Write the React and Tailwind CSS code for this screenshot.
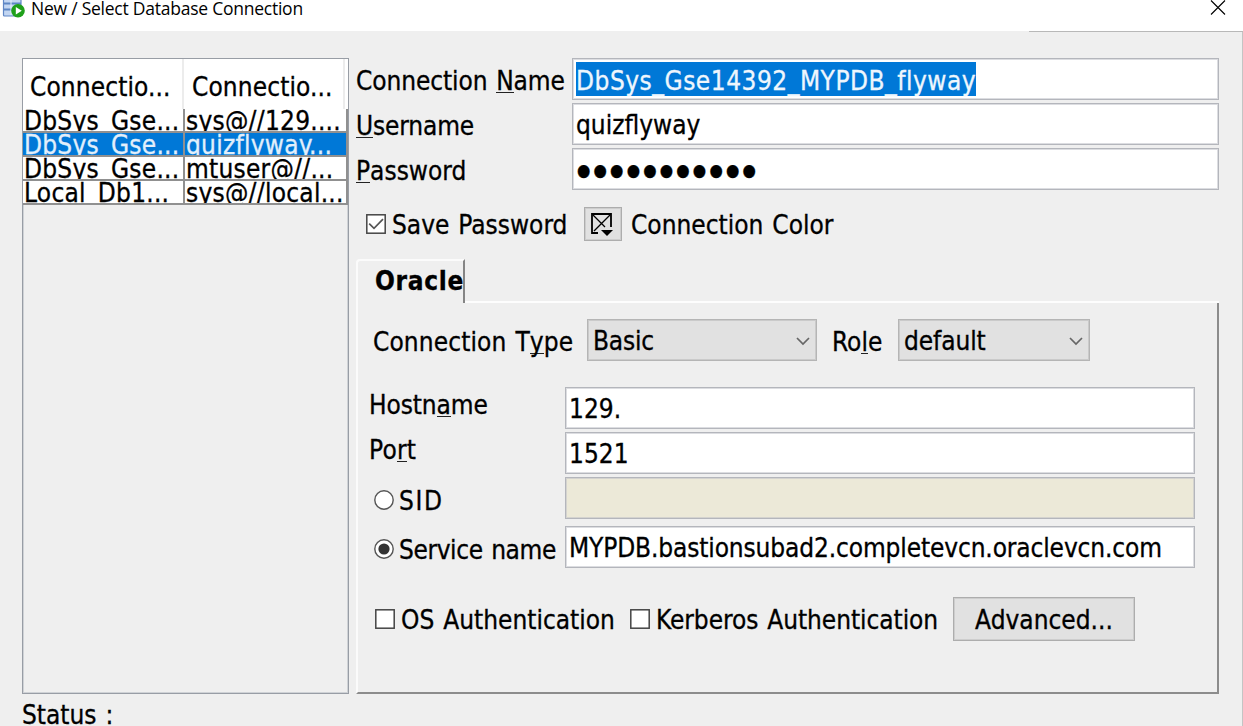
import React from "react";

function Field({ children, className = "" }) {
  return (
    <div className={`flex h-[42px] items-center overflow-hidden border border-[#b4b6bc] bg-white pt-[2px] pl-[3px] shadow-[inset_0_0_0_1px_#dcdde1] ${className}`}>
      {children}
    </div>
  );
}

function Key({ children }) {
  return <span className="inline-block h-[27px] border-b border-[#222]">{children}</span>;
}

function Check({ on = false }) {
  return (
    <svg viewBox="0 0 20 20" className="h-5 w-5 shrink-0">
      <rect x="0.8" y="0.8" width="18.4" height="18.4" fill="#fff" stroke="#444" strokeWidth="1.5" />
      {on && <path d="M3.2 9.6 L8 14.3 L17 5.2" fill="none" stroke="#555" strokeWidth="1.7" />}
    </svg>
  );
}

function Radio({ on = false }) {
  return (
    <svg viewBox="0 0 20 20" className="h-5 w-5 shrink-0">
      <circle cx="10" cy="10" r="9.2" fill="#fff" stroke="#555" strokeWidth="1.4" />
      {on && <circle cx="10" cy="10" r="5.6" fill="#333" />}
    </svg>
  );
}

function Select({ label, className }) {
  return (
    <div className={`flex h-[42px] items-center justify-between border border-[#b5b5b5] bg-[#e1e1e1] pt-[2px] pr-[5px] pl-[5px] shadow-[inset_0_0_0_1px_#cacaca] ${className}`}>
      <span>{label}</span>
      <svg viewBox="0 0 16 10" className="h-[10px] w-4">
        <path d="M2 2 L8 8 L14 2" fill="none" stroke="#666" strokeWidth="1.7" />
      </svg>
    </div>
  );
}

const rows = [
  { name: "DbSys_Gse...", detail: "sys@//129....", on: false },
  { name: "DbSys_Gse...", detail: "quizflyway...", on: true },
  { name: "DbSys_Gse...", detail: "mtuser@//...", on: false },
  { name: "Local_Db1...", detail: "sys@//local...", on: false },
];

function ConnectionList() {
  return (
    <div className="h-[636px] w-[327px] border border-[#989da5] shadow-[inset_0_0_0_1px_#cfd2d6]">
      <div className="flex h-[50px] bg-white">
        <div className="w-[161px] border-r-2 border-[#ececec] pt-[13px] pl-[7px] tracking-[0.1px]">Connectio...</div>
        <div className="w-[161px] border-r-2 border-[#ececec] pt-[13px] pl-2 tracking-[0.1px]">Connectio...</div>
      </div>
      {rows.map((r, i) => (
        <div
          key={i}
          className={`flex h-6 w-[325px] border-b-2 border-[#909090] leading-[25px] tracking-[0.25px] ${r.on ? "bg-[#0078d7] text-[#e2effb]" : "bg-white"}`}
        >
          <div className="h-full w-[162px] overflow-hidden border-r-2 border-[#909090] pl-px">{r.name}</div>
          <div className="h-full w-[163px] overflow-hidden border-r-2 border-[#909090] pl-px">{r.detail}</div>
        </div>
      ))}
    </div>
  );
}

function OraclePanel() {
  return (
    <div className="mt-[18px] w-[863px]">
      <div className="flex">
        <div className="h-[44px] w-[109px] rounded-tl border-t-2 border-r-2 border-l-2 border-t-[#fbfbfb] border-r-[#858585] border-l-[#fbfbfb] pt-[5px] pl-[17px] font-bold tracking-[0.7px]">
          Oracle
        </div>
        <div className="grow border-b-2 border-[#fdfdfd]" />
      </div>
      <div className="h-[391px] border-r-2 border-b-2 border-l-2 border-r-[#8c8c8c] border-b-[#8c8c8c] border-l-[#fbfbfb] pt-4 pl-[11px]">
        <div className="flex pl-[4px]">
          <div className="w-[214px] pt-[8px] tracking-[0.1px]">
            Connection T<Key>y</Key>pe
          </div>
          <Select label="Basic" className="w-[230px] tracking-[-0.2px]" />
          <div className="w-[81px] pt-[8px] pl-[15px]">
            Ro<Key>l</Key>e
          </div>
          <Select label="default" className="w-[192px] tracking-[-0.1px]" />
        </div>
        <div className="mt-[26px] flex">
          <div className="w-[196px] pt-[3px] tracking-[-0.1px]">
            Hostn<Key>a</Key>me
          </div>
          <Field className="w-[630px]">129.</Field>
        </div>
        <div className="mt-[3px] flex">
          <div className="w-[196px] pt-[3px] tracking-[0.2px]">
            Po<Key>r</Key>t
          </div>
          <Field className="w-[630px]">1521</Field>
        </div>
        <div className="mt-[3px] flex">
          <div className="flex h-[42px] w-[196px] items-center gap-[5px] pt-[4px] pl-[5px]">
            <Radio />
            <span className="pt-px tracking-[1.6px]">SID</span>
          </div>
          <div className="h-[42px] w-[630px] border border-[#b4b6bc] bg-[#ece9d8] shadow-[inset_0_0_0_1px_#d4d3cf]" />
        </div>
        <div className="mt-[7px] flex">
          <div className="flex h-[42px] w-[196px] items-center gap-[5px] pt-[4px] pl-[5px] whitespace-nowrap">
            <Radio on />
            <span className="pt-[2px] tracking-[-0.4px]">Service name</span>
          </div>
          <Field className="w-[630px]">
            <span className="tracking-[-0.13px]">MYPDB.bastionsubad2.completevcn.oraclevcn.com</span>
          </Field>
        </div>
        <div className="mt-[29px] flex items-center pl-[6px] whitespace-nowrap">
          <Check />
          <span className="ml-[6px] w-[229px] pt-px">OS Authentication</span>
          <Check />
          <span className="ml-[6px] w-[297px] pt-px tracking-[-0.06px]">Kerberos Authentication</span>
          <div className="flex h-[44px] w-[182px] items-center justify-center border border-[#adadad] bg-[#e1e1e1] pt-px shadow-[inset_0_0_0_1px_#cdcdcd]">
            Advanced...
          </div>
        </div>
      </div>
    </div>
  );
}

export default function App() {
  return (
    <div className="flex h-[726px] w-[1243px] flex-col overflow-hidden bg-[#efefef] font-['DejaVu_Sans_Condensed','DejaVu_Sans',sans-serif] text-[26px] leading-[30px] text-black [word-spacing:1.5px] [-webkit-text-stroke:0.3px]">
      <div className="flex h-[31px] shrink-0 items-start bg-white">
        <svg viewBox="0 0 28 20" className="h-5 w-7">
          <rect x="3.5" y="-3" width="17.5" height="19" rx="1" fill="#c3d6f2" stroke="#5f86c6" strokeWidth="1.2" />
          <path d="M4 3.5H21M4 9.5H21" stroke="#5d86c4" strokeWidth="1.8" />
          <path d="M11 -1V15" stroke="#e8f0fb" strokeWidth="1" />
          <circle cx="18" cy="10.7" r="6.8" fill="#1fa01a" />
          <path d="M15.8 7L21.8 10.7L15.8 14.4Z" fill="#fff" />
        </svg>
        <div className="-mt-px grow pl-[3px] font-['Open_Sans',sans-serif] text-[17.5px] leading-[19px] tracking-[-0.24px] [word-spacing:0px] [-webkit-text-stroke:0px]">
          New / Select Database Connection
        </div>
        <svg viewBox="0 0 16 16" className="mr-[17px] h-4 w-4">
          <path d="M1 0.5L15 14.5M15 0.5L1 14.5" stroke="#000" strokeWidth="1.1" />
        </svg>
      </div>
      <div className="flex h-px shrink-0 justify-end">
        <div className="w-[214px] bg-[#b8b8b8]" />
      </div>
      <div className="flex grow border-r border-[#c4c4c4] pt-[26px] pl-[22px]">
        <div className="w-[334px]">
          <ConnectionList />
          <div className="mt-[6px]">Status :</div>
        </div>
        <div>
          <div className="flex">
            <div className="w-[216px] pt-[8px] tracking-[-0.1px]">
              Connection <Key>N</Key>ame
            </div>
            <Field className="w-[647px]">
              <span className="-mt-[3px] h-[34px] bg-[#0078d7] pt-[4px] tracking-[0.51px] text-[#eef6fd]">DbSys_Gse14392_MYPDB_flyway</span>
            </Field>
          </div>
          <div className="mt-[3px] flex">
            <div className="w-[216px] pt-[8px] tracking-[-0.15px]">
              <Key>U</Key>sername
            </div>
            <Field className="w-[647px]">quizflyway</Field>
          </div>
          <div className="mt-[3px] flex">
            <div className="w-[216px] pt-[8px]">
              <Key>P</Key>assword
            </div>
            <Field className="w-[647px]">
              <span className="pl-px text-[17px] tracking-[3.2px]">●●●●●●●●●●●</span>
            </Field>
          </div>
          <div className="mt-[17px] flex h-[34px] items-center pl-[10px]">
            <Check on />
            <span className="ml-[6px] w-[192px] pt-[2px]">Save Password</span>
            <div className="flex h-[34px] w-[38px] items-center justify-center border border-[#adadad] bg-[#e1e1e1] shadow-[inset_0_0_0_1px_#cdcdcd]">
              <svg viewBox="0 0 24 24" className="-ml-[2px] h-6 w-6">
                <path d="M8 21H2V2H21V15" fill="none" stroke="#000" strokeWidth="1.8" />
                <path d="M3 3L15 15M20 3L4 19" stroke="#000" strokeWidth="1.3" />
                <path d="M11 18H23L17 24Z" fill="#000" />
              </svg>
            </div>
            <span className="ml-[9px] pt-[2px]">Connection Color</span>
          </div>
          <OraclePanel />
        </div>
      </div>
    </div>
  );
}
